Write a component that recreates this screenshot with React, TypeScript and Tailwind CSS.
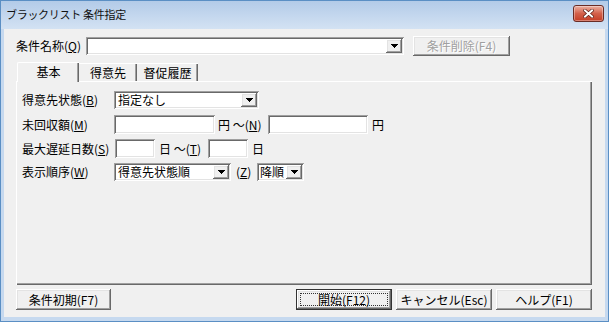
import React from "react";

const raised =
  "shadow-[inset_-1px_-1px_0_#696969,inset_1px_1px_0_#ffffff,inset_-2px_-2px_0_#a0a0a0,inset_2px_2px_0_#e3e3e3]";
const sunken =
  "shadow-[inset_1px_1px_0_#a0a0a0,inset_-1px_-1px_0_#ffffff,inset_2px_2px_0_#696969,inset_-2px_-2px_0_#e3e3e3]";

function Arrow() {
  return (
    <svg width="7" height="4" viewBox="0 0 7 4" shapeRendering="crispEdges">
      <rect x="0" y="0" width="7" height="1" fill="#000" />
      <rect x="1" y="1" width="5" height="1" fill="#000" />
      <rect x="2" y="2" width="3" height="1" fill="#000" />
      <rect x="3" y="3" width="1" height="1" fill="#000" />
    </svg>
  );
}

function DropBtn() {
  return (
    <div className={`w-[16px] h-[14px] bg-[#f0f0f0] ${raised} flex items-center justify-center shrink-0`}>
      <Arrow />
    </div>
  );
}

function U({ c }: { c: string }) {
  return <span className="underline underline-offset-[1px]">{c}</span>;
}

function Btn({
  className,
  children,
  disabled,
}: {
  className: string;
  children: React.ReactNode;
  disabled?: boolean;
}) {
  return (
    <div
      className={`${className} bg-[#f0f0f0] ${raised} flex items-center justify-center leading-none ${
        disabled ? "text-[#a0a0a0] [text-shadow:1px_1px_0_#ffffff]" : "text-black"
      }`}
    >
      {children}
    </div>
  );
}

export default function App() {
  return (
    <div className="w-[609px] h-[322px] bg-[#c6d9ef] border border-[#5b8fc4] flex flex-col font-['Noto_Sans_CJK_JP','Noto_Sans',sans-serif] text-[12px] text-black overflow-hidden select-none">
      {/* Title bar */}
      <div className="h-[28px] shrink-0 flex items-start justify-between pl-[5px] pr-[4px] bg-gradient-to-b from-[#b3cbe8] to-[#d3e2f3]">
        <span className="mt-[5px] text-[11px] tracking-[-0.3px] leading-[17px] text-[#111]">ブラックリスト 条件指定</span>
        <div className="mt-[4px] w-[31px] h-[17px] rounded-[3px] border border-[#6a2c25] bg-gradient-to-b from-[#eab0a2] via-[#d3604a] to-[#c43c24] flex items-center justify-center shadow-[inset_0_0_0_1px_rgba(255,255,255,0.35)]">
          <svg width="11" height="9" viewBox="0 0 11 9">
            <path d="M2 1.5 L9 7.5 M9 1.5 L2 7.5" stroke="#5a1d14" strokeWidth="3.4" strokeLinecap="square" />
            <path d="M2 1.5 L9 7.5 M9 1.5 L2 7.5" stroke="#ffffff" strokeWidth="2" strokeLinecap="square" />
          </svg>
        </div>
      </div>

      {/* Client area */}
      <div className="flex-1 ml-[3px] mr-[3px] mb-[4px] bg-[#f0f0f0] flex flex-col pl-[12px] pr-[13px]">
        {/* Row 1 */}
        <div className="mt-[7px] h-[20px] flex items-center">
          <span className="w-[70px] leading-none">
            条件名称(<U c="Q" />)
          </span>
          <div className={`w-[318px] h-[18px] bg-white ${sunken} flex items-center justify-end pr-[2px]`}>
            <DropBtn />
          </div>
          <Btn className="ml-[9px] w-[97px] h-[20px]" disabled>
            条件削除(F4)
          </Btn>
        </div>

        {/* Tabs */}
        <div className="mt-[6px] h-[19px] flex items-end pl-[1px]">
          <div className="relative z-10 w-[62px] h-[20px] mb-[-1px] bg-[#f0f0f0] border-l border-t border-white rounded-tl-[2px] shadow-[inset_-1px_0_0_#696969,inset_-2px_0_0_#a0a0a0] flex items-center justify-center leading-none pb-[1px]">
            基本
          </div>
          <div className="w-[58px] h-[18px] border-t border-white shadow-[inset_-1px_0_0_#696969,inset_-2px_0_0_#a0a0a0] flex items-center justify-center leading-none">
            得意先
          </div>
          <div className="w-[61px] h-[18px] border-t border-white shadow-[inset_-1px_0_0_#696969,inset_-2px_0_0_#a0a0a0] flex items-center justify-center leading-none">
            督促履歴
          </div>
        </div>

        {/* Tab panel */}
        <div className="h-[204px] shadow-[inset_1px_1px_0_#ffffff,inset_-1px_-1px_0_#696969,inset_-2px_-2px_0_#a0a0a0] flex flex-col gap-[5px] pt-[10px] pl-[6px]">
          {/* 得意先状態 */}
          <div className="h-[19px] flex items-start">
            <span className="w-[92px] leading-[18px]">
              得意先状態(<U c="B" />)
            </span>
            <div className={`w-[145px] h-[18px] bg-white ${sunken} flex items-center justify-between pl-[4px] pr-[2px]`}>
              <span className="leading-none">指定なし</span>
              <DropBtn />
            </div>
          </div>
          {/* 未回収額 */}
          <div className="h-[19px] flex items-start">
            <span className="w-[92px] leading-[19px]">
              未回収額(<U c="M" />)
            </span>
            <div className={`w-[101px] h-[19px] bg-white ${sunken}`} />
            <span className="w-[53px] pl-[3px] leading-[19px] whitespace-nowrap">
              円 ～(<U c="N" />)
            </span>
            <div className={`w-[100px] h-[19px] bg-white ${sunken}`} />
            <span className="pl-[4px] leading-[19px]">円</span>
          </div>
          {/* 最大遅延日数 */}
          <div className="h-[19px] flex items-start">
            <span className="w-[93px] leading-[19px] whitespace-nowrap">
              最大遅延日数(<U c="S" />)
            </span>
            <div className={`w-[40px] h-[19px] bg-white ${sunken}`} />
            <span className="w-[53px] pl-[4px] leading-[19px] whitespace-nowrap">
              日 ～(<U c="T" />)
            </span>
            <div className={`w-[40px] h-[19px] bg-white ${sunken}`} />
            <span className="pl-[4px] leading-[19px]">日</span>
          </div>
          {/* 表示順序 */}
          <div className="h-[19px] flex items-start">
            <span className="w-[92px] leading-[18px]">
              表示順序(<U c="W" />)
            </span>
            <div className={`w-[117px] h-[18px] bg-white ${sunken} flex items-center justify-between pl-[4px] pr-[2px]`}>
              <span className="leading-none">得意先状態順</span>
              <DropBtn />
            </div>
            <span className="w-[26px] pl-[5px] leading-[18px]">
              (<U c="Z" />)
            </span>
            <div className={`w-[47px] h-[18px] bg-white ${sunken} flex items-center justify-between pl-[3px] pr-[2px]`}>
              <span className="leading-none">降順</span>
              <DropBtn />
            </div>
          </div>
        </div>

        {/* Bottom buttons */}
        <div className="mt-[4px] h-[21px] flex items-stretch">
          <Btn className="w-[95px]">条件初期(F7)</Btn>
          <div className="ml-auto flex gap-[4px]">
            <div className="w-[96px] border border-[#333] flex">
              <div className={`flex-1 bg-[#f0f0f0] ${raised} flex p-[3px]`}>
                <div className="flex-1 border border-dotted border-[#333] flex items-center justify-center leading-none">
                  開始(F12)
                </div>
              </div>
            </div>
            <Btn className="w-[96px]">キャンセル(Esc)</Btn>
            <Btn className="w-[96px]">ヘルプ(F1)</Btn>
          </div>
        </div>
      </div>
    </div>
  );
}
